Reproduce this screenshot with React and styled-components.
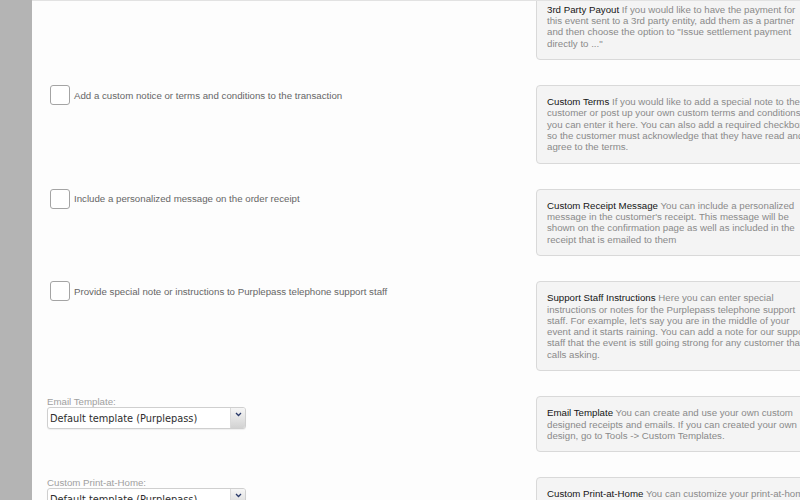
import React from "react";
import styled, { createGlobalStyle } from "styled-components";

const GlobalStyle = createGlobalStyle`
  html, body {
    margin: 0;
    padding: 0;
    width: 800px;
    height: 500px;
    overflow: hidden;
    background: #fdfdfd;
  }
`;

const Page = styled.div`
  display: flex;
  width: 800px;
  height: 500px;
  overflow: hidden;
  font-family: "Liberation Sans", Arial, sans-serif;
`;

const Sidebar = styled.div`
  width: 32px;
  flex-shrink: 0;
  background: #b4b4b4;
`;

const Main = styled.div`
  flex: 1;
  border-top: 1px solid #e2e2e2;
  background: #fdfdfd;
  overflow: hidden;
`;

const List = styled.div`
  display: flex;
  flex-direction: column;
  gap: 25.2px;
  margin-top: -8.2px;
  padding-left: 15px;
`;

const Row = styled.div`
  display: grid;
  grid-template-columns: 489px 300px;
  align-items: start;
`;

const CheckRow = styled.label`
  display: flex;
  align-items: center;
  gap: 4px;
  padding-left: 3px;
  font-size: 9.7px;
  color: #666;
`;

const Box = styled.span`
  width: 18px;
  height: 18px;
  border: 1px solid #a4a4a4;
  border-radius: 3px;
  background: #fff;
  flex-shrink: 0;
`;

const Field = styled.div`
  display: flex;
  flex-direction: column;
`;

const FieldLabel = styled.span`
  font-size: 9.7px;
  line-height: 11px;
  color: #a0a0a0;
`;

const Select = styled.div`
  width: 199px;
  height: 22px;
  box-sizing: border-box;
  display: flex;
  align-items: stretch;
  border: 1px solid #cfcfcf;
  border-radius: 3px;
  background: #fff;
  box-shadow: 0 1px 1px rgba(0, 0, 0, 0.06);
  overflow: hidden;
`;

const SelectText = styled.span`
  flex: 1;
  display: flex;
  align-items: center;
  padding-left: 2px;
  font-family: "DejaVu Sans", Verdana, sans-serif;
  font-size: 9.8px;
  color: #2e2e2e;
`;

const Arrow = styled.span`
  width: 14px;
  display: flex;
  align-items: flex-start;
  justify-content: center;
  padding-top: 4px;
  border-left: 1px solid #dadada;
  background: linear-gradient(#f6f6f6, #d2d2d2);
`;

const Card = styled.div`
  box-sizing: border-box;
  width: 300px;
  padding: 10px 23px 10px 10px;
  background: #f4f4f4;
  border: 1px solid #d9d9d9;
  border-radius: 4px;
  font-size: 9.7px;
  line-height: 11.3px;
  color: #8a8a8a;
`;

const CardTitle = styled.span`
  color: #151515;
`;

const Chevron = () => (
  <svg width="7" height="5" viewBox="0 0 7 5">
    <path d="M1 1 L3.5 3.5 L6 1" fill="none" stroke="#2a3a6a" strokeWidth="1.3" />
  </svg>
);

const TemplateSelect = ({ label }) => (
  <Field>
    <FieldLabel>{label}</FieldLabel>
    <Select>
      <SelectText>Default template (Purplepass)</SelectText>
      <Arrow>
        <Chevron />
      </Arrow>
    </Select>
  </Field>
);

const options = [
  {
    left: null,
    title: "3rd Party Payout",
    text: 'If you would like to have the payment for this event sent to a 3rd party entity, add them as a partner and then choose the option to "Issue settlement payment directly to ..."',
  },
  {
    left: { check: "Add a custom notice or terms and conditions to the transaction" },
    title: "Custom Terms",
    text: "If you would like to add a special note to the customer or post up your own custom terms and conditions, you can enter it here. You can also add a required checkbox so the customer must acknowledge that they have read and agree to the terms.",
  },
  {
    left: { check: "Include a personalized message on the order receipt" },
    title: "Custom Receipt Message",
    text: "You can include a personalized message in the customer's receipt. This message will be shown on the confirmation page as well as included in the receipt that is emailed to them",
  },
  {
    left: { check: "Provide special note or instructions to Purplepass telephone support staff" },
    title: "Support Staff Instructions",
    text: "Here you can enter special instructions or notes for the Purplepass telephone support staff. For example, let's say you are in the middle of your event and it starts raining. You can add a note for our support staff that the event is still going strong for any customer that calls asking.",
  },
  {
    left: { select: "Email Template:" },
    title: "Email Template",
    text: "You can create and use your own custom designed receipts and emails. If you can created your own design, go to Tools -> Custom Templates.",
  },
  {
    left: { select: "Custom Print-at-Home:" },
    title: "Custom Print-at-Home",
    text: "You can customize your print-at-home tickets with your own design and layout.",
  },
];

const App = () => {
  return (
    <>
      <GlobalStyle />
      <Page>
        <Sidebar />
        <Main>
          <List>
            {options.map((opt) => (
              <Row key={opt.title}>
                <div>
                  {opt.left?.check && (
                    <CheckRow>
                      <Box />
                      {opt.left.check}
                    </CheckRow>
                  )}
                  {opt.left?.select && <TemplateSelect label={opt.left.select} />}
                </div>
                <Card>
                  <CardTitle>{opt.title}</CardTitle> {opt.text}
                </Card>
              </Row>
            ))}
          </List>
        </Main>
      </Page>
    </>
  );
};

export default App;
